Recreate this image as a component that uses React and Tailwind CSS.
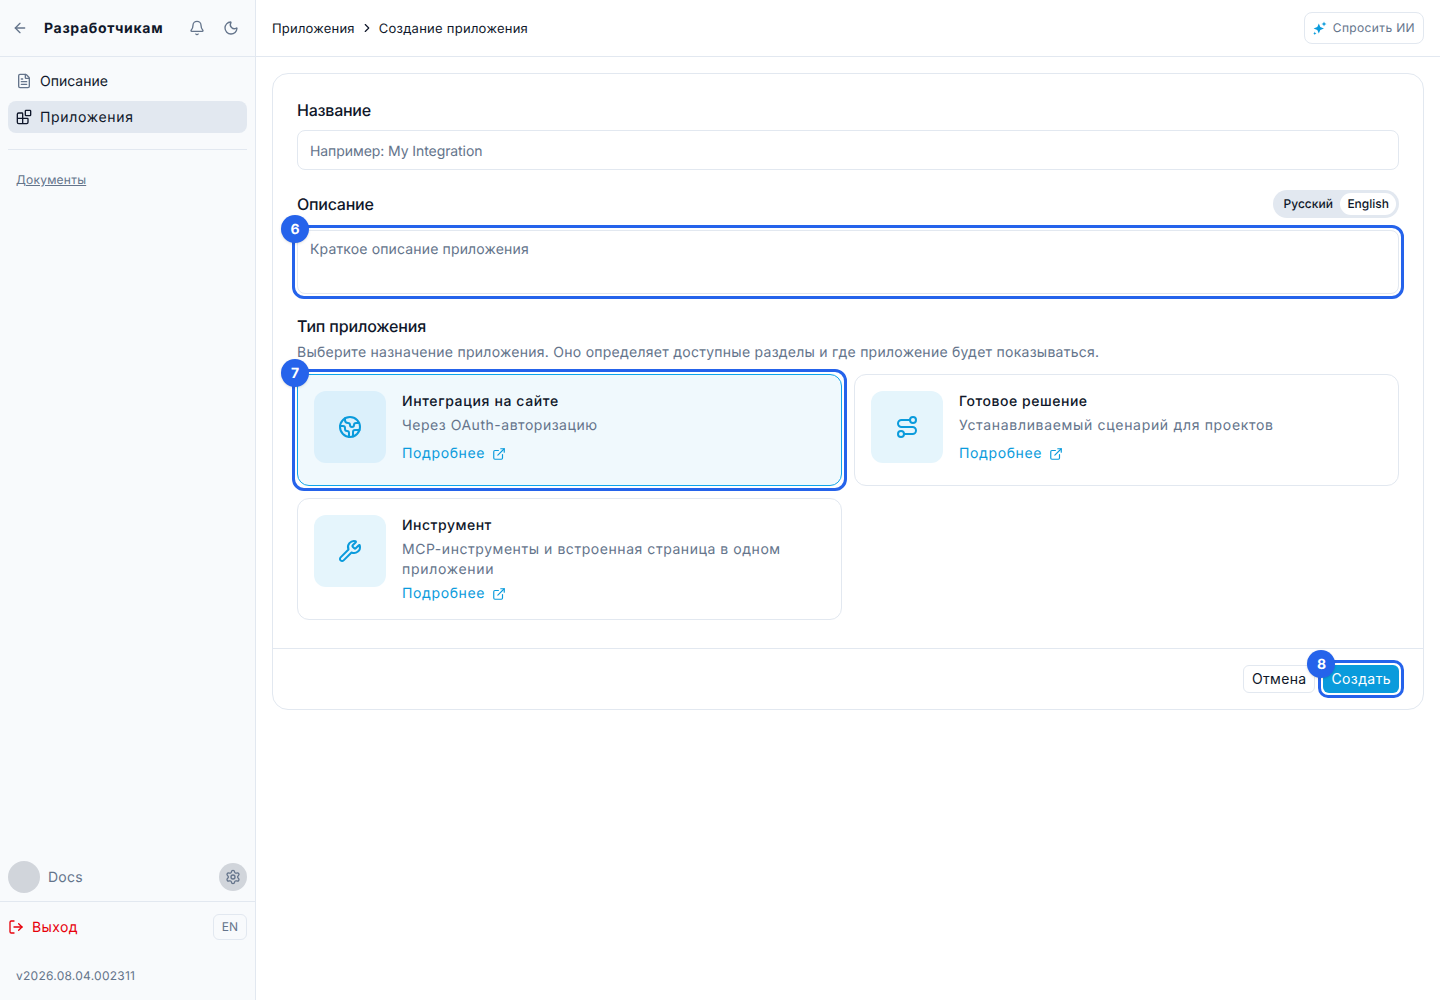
import React from "react";
import { ArrowLeft, Bell, Moon, FileText, Blocks, Settings, LogOut, ChevronRight, Route, Wrench, ExternalLink, Earth } from "lucide-react";

function Mark({ n, className, badge }) {
  return (
    <div className={"absolute border-[3px] border-[#2563eb] pointer-events-none " + className}>
      <div className={"absolute flex h-7 w-7 items-center justify-center rounded-full bg-[#2563eb] pt-px text-sm font-bold text-white shadow " + badge}>{n}</div>
    </div>
  );
}

function TypeCard({ title, titleTrack, Icon, active, tint, mark, children }) {
  return (
    <div className={"relative flex min-h-[112px] items-start gap-4 rounded-xl border p-4 " + (active ? "border-[#0ea5e9] bg-[#f0f9fd]" : "border-[#e2e8f0] bg-white")}>
      <div className={"flex h-[72px] w-[72px] shrink-0 items-center justify-center rounded-xl " + tint}>
        <Icon size={24} strokeWidth={2} className="text-[#0a9bdc]" />
      </div>
      <div className="-mb-px flex min-w-0 flex-col pt-px text-sm leading-5">
        <div className={"font-medium text-[#0f172a] " + titleTrack}>{title}</div>
        <div className="mt-1 min-h-6 text-[#64748b]">{children}</div>
        <a className="mt-1 flex items-center gap-[7px] tracking-[0.62px] text-[#0a9bdc]">
          Подробнее <ExternalLink size={14} strokeWidth={2} />
        </a>
      </div>
      {mark}
    </div>
  );
}

function Sparkle() {
  return (
    <svg viewBox="0 0 14 14" className="h-3.5 w-3.5 text-[#0a9bdc]" fill="currentColor">
      <path d="M5.8 2.4 7.3 6 11 7.5 7.3 9 5.8 12.6 4.3 9 .6 7.5 4.3 6Z" />
      <path d="M11 .4 11.7 2.2 13.5 3 11.7 3.8 11 5.6 10.3 3.8 8.5 3 10.3 2.2Z" />
      <path d="M1.8 10.6 2.3 11.9 3.5 12.4 2.3 12.9 1.8 14 1.3 12.9.2 12.4 1.3 11.9Z" />
    </svg>
  );
}

export default function App() {
  return (
    <div className="flex h-screen bg-white font-['Inter',sans-serif] text-[#0f172a] [text-rendering:geometricPrecision]">
      <aside className="flex w-[256px] shrink-0 flex-col border-r border-[#e2e8f0] bg-[#f8fafc]">
        <div className="flex h-[57px] shrink-0 items-center border-b border-[#e2e8f0] pl-3 pr-4">
          <ArrowLeft size={16} className="text-[#64748b]" />
          <span className="ml-4 pt-px text-sm font-bold tracking-[0.69px]">Разработчикам</span>
          <Bell size={16} className="ml-auto text-[#64748b]" />
          <Moon size={16} className="ml-[18px] text-[#64748b]" />
        </div>
        <nav className="flex flex-col gap-1 p-2 text-sm">
          <div className="flex h-8 items-center gap-2 rounded-lg px-2">
            <FileText size={16} className="text-[#64748b]" /><span className="pt-[2px]">Описание</span>
          </div>
          <div className="flex h-8 items-center gap-2 rounded-lg bg-[#e2e8f0] px-2">
            <Blocks size={16} className="text-[#0f172a]" /><span className="pt-[2px] tracking-[0.68px]">Приложения</span>
          </div>
        </nav>
        <div className="mx-2 mt-2 border-t border-[#e2e8f0]" />
        <a className="ml-4 mt-[22px] w-fit text-xs leading-4 tracking-[0.22px] text-[#64748b] underline">Документы</a>
        <div className="mt-auto flex items-center gap-2 px-2 pb-2">
          <div className="h-8 w-8 rounded-full bg-[#d1d5db]" />
          <span className="pt-[2px] text-sm tracking-[0.25px] text-[#64748b]">Docs</span>
          <div className="ml-auto flex h-7 w-7 items-center justify-center rounded-full bg-[#d1d5db]">
            <Settings size={16} className="text-[#64748b]" />
          </div>
        </div>
        <div className="flex h-[50px] items-center border-t border-[#e2e8f0] px-2">
          <LogOut size={16} className="text-[#e7000b]" />
          <span className="ml-2 pt-[2px] text-sm tracking-[0.4px] text-[#e7000b]">Выход</span>
          <span className="ml-auto flex h-[26px] w-[34px] items-center justify-center rounded-md border border-[#e2e8f0] text-xs text-[#64748b]">EN</span>
        </div>
        <div className="px-4 pb-4 pt-[17px] text-xs leading-4 tracking-[0.25px] text-[#64748b]">v2026.08.04.002311</div>
      </aside>

      <main className="flex min-w-0 flex-1 flex-col">
        <header className="flex h-[57px] shrink-0 items-center border-b border-[#e2e8f0] pl-4 pr-4 text-[13px] leading-5">
          <span className="pt-px tracking-[0.2px]">Приложения</span>
          <ChevronRight size={14} className="mx-[5px] text-[#0f172a]" />
          <span className="pt-px tracking-[0.26px]">Создание приложения</span>
          <div className="ml-auto flex h-8 items-center gap-[6px] rounded-lg border border-[#e2e8f0] px-2 text-xs tracking-[0.36px] text-[#64748b]">
            <Sparkle />Спросить ИИ
          </div>
        </header>

        <div className="p-4">
          <div className="rounded-2xl border border-[#e2e8f0] bg-white">
            <div className="px-6 pb-7 pt-6">
              <div className="text-base font-medium leading-6 tracking-[-0.25px]">Название</div>
              <div className="mt-2 flex h-10 items-center rounded-lg border border-[#e2e8f0] px-3 pt-[3px] text-sm tracking-[-0.08px] text-[#64748b]">Например: My Integration</div>

              <div className="mt-5 flex h-7 items-center justify-between">
                <span className="text-base font-medium tracking-[-0.25px]">Описание</span>
                <div className="flex h-7 items-center rounded-full bg-[#e2e8f0] p-[3px] text-xs font-medium">
                  <span className="px-[7.5px] leading-[22px]">Русский</span>
                  <span className="rounded-full bg-white px-[7px] leading-[22px]">English</span>
                </div>
              </div>
              <div className="relative mt-3">
                <div className="h-16 rounded-lg border border-[#e2e8f0] px-3 pb-2 pt-[9px] text-sm leading-5 tracking-[0.15px] text-[#64748b]">Краткое описание приложения</div>
                <Mark n="6" className="-inset-[5px] rounded-xl" badge="-left-[14px] -top-[13px]" />
              </div>

              <div className="mt-5 text-base font-medium leading-6 tracking-[-0.15px]">Тип приложения</div>
              <div className="-mb-px mt-1 pt-px text-sm leading-5 tracking-[0.26px] text-[#64748b]">Выберите назначение приложения. Оно определяет доступные разделы и где приложение будет показываться.</div>

              <div className="mt-3 grid grid-cols-2 gap-3">
                <TypeCard active tint="bg-[#dbf0fb]" title="Интеграция на сайте" titleTrack="tracking-[0.63px]" Icon={Earth}
                  mark={<Mark n="7" className="-inset-[6px] rounded-xl" badge="-left-[14px] -top-[13px]" />}>
                  <span className="tracking-[0.52px]">Через OAuth-авторизацию</span>
                </TypeCard>
                <TypeCard tint="bg-[#e5f5fc]" title="Готовое решение" titleTrack="tracking-[0.53px]" Icon={Route}>
                  <span className="tracking-[0.68px]">Устанавливаемый сценарий для проектов</span>
                </TypeCard>
                <TypeCard tint="bg-[#e5f5fc]" title="Инструмент" titleTrack="tracking-[0.5px]" Icon={Wrench}>
                  <span className="tracking-[0.55px]">MCP-инструменты и встроенная страница в одном</span> <span className="tracking-[0.7px]">приложении</span>
                </TypeCard>
              </div>
            </div>
            <div className="flex justify-end gap-2 border-t border-[#e2e8f0] px-6 py-4">
              <button className="h-7 rounded-md border border-[#e2e8f0] px-2 text-sm tracking-[0.33px]">Отмена</button>
              <div className="relative">
                <button className="h-7 rounded-md bg-[#0a9bdc] px-2 text-sm tracking-[0.4px] text-white">Создать</button>
                <Mark n="8" className="-inset-[5px] rounded-[10px]" badge="-left-[14px] -top-[13px]" />
              </div>
            </div>
          </div>
        </div>
      </main>
    </div>
  );
}
